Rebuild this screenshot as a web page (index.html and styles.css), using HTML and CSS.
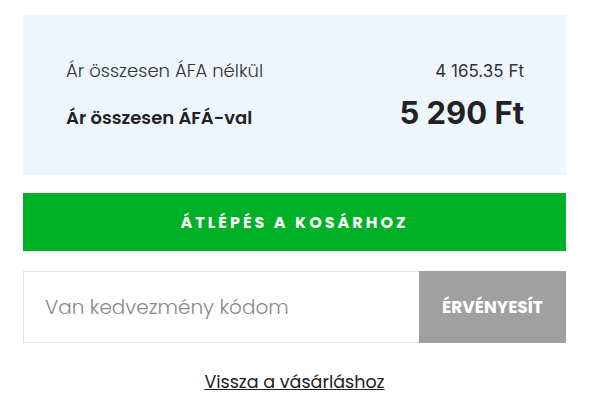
FILE: index.html
```html
<!DOCTYPE html>
<html lang="hu">
<head>
<meta charset="utf-8">
<title>Kosár összesítő</title>
<link rel="stylesheet" href="styles.css">
</head>
<body>
<div class="cart">
  <div class="summary">
    <div class="row">
      <span class="label">Ár összesen ÁFA nélkül</span>
      <span class="value">4 165.35 Ft</span>
    </div>
    <div class="row total">
      <span class="label">Ár összesen ÁFÁ-val</span>
      <span class="value">5 290 Ft</span>
    </div>
  </div>
  <a class="checkout" href="#">ÁTLÉPÉS A KOSÁRHOZ</a>
  <form class="coupon">
    <input class="coupon-input" type="text" placeholder="Van kedvezmény kódom">
    <button class="coupon-btn" type="button">ÉRVÉNYESÍT</button>
  </form>
  <div class="back"><a href="#">Vissza a vásárláshoz</a></div>
</div>
</body>
</html>
```
FILE: styles.css
```css
* { box-sizing: border-box; }
html, body { margin: 0; padding: 0; background: #fff; }
body { font-family: "Poppins", "Inter", "Open Sans", sans-serif; color: #222; }
.cart {
  width: 543px;
  margin: 15px 0 0 23px;
  display: flex;
  flex-direction: column;
}
.summary {
  background: #edf5fd;
  height: 160px;
  padding: 44px 42px 0 43px;
  display: flex;
  flex-direction: column;
  gap: 10px;
}
.row {
  display: flex;
  justify-content: space-between;
  align-items: baseline;
}
.row .label { font-size: 18px; font-weight: 300; color: #333; line-height: 24px; }
.row .value { font-family: "Inter", sans-serif; font-size: 17px; font-weight: 400; color: #333; }
.row.total .label { font-size: 18px; font-weight: 600; color: #222; }
.row.total .value { font-size: 31px; font-weight: 700; color: #222; line-height: 40px; }
.checkout {
  margin-top: 18px;
  height: 58px;
  background: #00b026;
  color: #fff;
  text-decoration: none;
  font-weight: 700;
  font-size: 16px;
  letter-spacing: 3px;
  display: flex;
  align-items: center;
  justify-content: center;
}
.coupon {
  margin: 20px 0 0 0;
  height: 72px;
  display: flex;
}
.coupon-input {
  flex: 1;
  border: 1px solid #dde3e8;
  border-right: none;
  padding: 0 21px;
  font-family: inherit;
  font-size: 20px;
  font-weight: 300;
  color: #333;
  outline: none;
  min-width: 0;
}
.coupon-input::placeholder { color: #888; }
.coupon-btn {
  width: 147px;
  border: none;
  background: #a0a0a0;
  color: #fff;
  font-family: inherit;
  font-weight: 700;
  font-size: 17px;
}
.back {
  margin-top: 26px;
  text-align: center;
}
.back a {
  color: #222;
  font-size: 17.5px;
  font-weight: 400;
}
```
